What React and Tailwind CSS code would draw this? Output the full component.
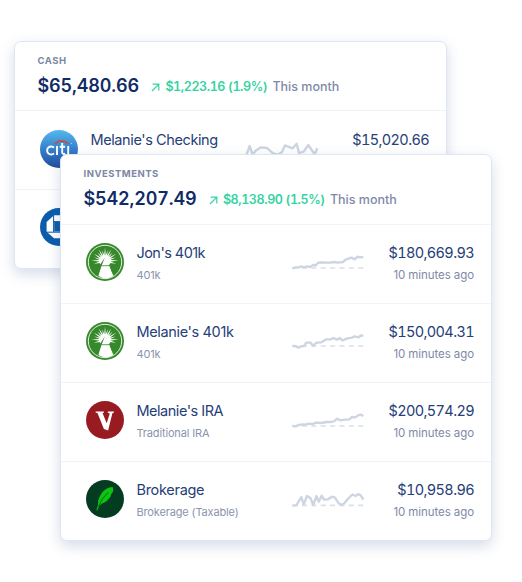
import React from 'react';

function Citi() {
  return (
    <svg viewBox="0 0 38 38" className="block size-[38px]">
      <defs>
        <linearGradient id="citi" x1="0" y1="0" x2="0" y2="1">
          <stop offset="0" stopColor="#56b8ec" />
          <stop offset="0.5" stopColor="#3580cc" />
          <stop offset="1" stopColor="#214c9c" />
        </linearGradient>
      </defs>
      <circle cx="19" cy="19" r="19" fill="url(#citi)" />
      <path d="M15 13.6Q21.5 8.2 28.2 13.6" fill="none" stroke="#d5463c" strokeWidth="1.7" />
      <g fill="none" stroke="#fff" strokeWidth="1.9">
        <path d="M14 17.7a4 4 0 1 0 0 5.6" />
        <path d="M17 16v9" />
        <path d="M22.2 13v9.2q0 2.3 3 1.6M19.7 16.8h5.4" />
        <path d="M28.2 16v9" />
      </g>
      <circle cx="31.5" cy="13.5" r="0.5" fill="#d7e9f8" />
    </svg>
  );
}

function Chase() {
  return (
    <svg viewBox="0 0 38 38" className="block size-[38px]">
      <circle cx="19" cy="19" r="19" fill="#0b5cab" />
      <path d="M14 7.2h11l6 6v11l-6 6H14l-7.4-6.4V14z" fill="#fff" />
      <path d="M14.2 14h10v9.6h-10z" fill="#0b5cab" />
      <path d="M13.6 7v17M6 24.2h19M31 13.6H14M24.4 31V14" stroke="#0b5cab" strokeWidth="1" fill="none" />
    </svg>
  );
}

const RAYS = [-104, -88, -72, -57, -42, -28, -14, 0, 14, 28, 42, 57, 72, 88, 104];

function Fidelity() {
  return (
    <svg viewBox="0 0 38 38" className="block size-[38px]">
      <circle cx="19" cy="19" r="19" fill="#36892a" />
      <circle cx="19" cy="19" r="16.7" fill="none" stroke="#f2f8ef" strokeWidth="0.9" />
      <g fill="#fff">
        {RAYS.map((a, i) => (
          <path key={a} d={i % 2 ? 'M17.8 17L19 4.6L20.2 17z' : 'M17.8 17L19 6.6L20.2 17z'} transform={`rotate(${a} 19 18)`} />
        ))}
        <circle cx="19" cy="18" r="5.8" />
        <path d="M15.4 22.5h7.8l4.2 10.6q-8 4.6-15 0z" />
      </g>
      <path d="M18.9 14.5L13 29l-3.4-1.6 4.6-6z" fill="#36892a" />
      <path d="M15.4 22.7h7.8" stroke="#36892a" strokeWidth="0.8" />
      <path d="M23.8 23.2l5.6 4.4-3.3 2z" fill="#36892a" />
    </svg>
  );
}

function Vanguard() {
  return (
    <svg viewBox="0 0 38 38" className="block size-[38px]">
      <circle cx="19" cy="19" r="19" fill="#981b22" />
      <path
        d="M9.6 10.4h8.3v1.2l-1.3.6 4.1 10 3.1-9.6-2-.9v-1.3h6.1v1l-1.5.9-4.3 17.2-4.2-1.6-6.3-15.6-2-.7z"
        fill="#fff"
      />
    </svg>
  );
}

function Robinhood() {
  return (
    <svg viewBox="0 0 38 38" className="block size-[38px]">
      <circle cx="19" cy="19" r="19" fill="#043c22" />
      <path
        d="M10.4 30L11.9 25.6L12.2 20.2Q12.8 17.6 15.8 13Q20 7.4 26.4 6.9Q27.6 8 27.1 11.4L25 14.6L24.4 17Q22 19.4 21 20.8Q18.4 23 15.6 23.8L13.6 25.4L11.3 30.4Z"
        fill="#0bc40f"
      />
      <path d="M12.4 26.6q3.4-8.8 9.8-14.2" fill="none" stroke="#043c22" strokeWidth="0.7" />
    </svg>
  );
}

function Spark({ points, base }) {
  return (
    <svg viewBox="0 0 222 120" className="block h-10 w-[74px] shrink-0" fill="none">
      <path d={`M5 ${base}H217`} stroke="#d9e0ea" strokeWidth="5" strokeDasharray="15 13.1" />
      <polyline points={points} stroke="#ccd5e1" strokeWidth="7" strokeLinejoin="round" />
    </svg>
  );
}

function Header({ label, total, change, heightClass }) {
  return (
    <div className={`pl-[22.5px] pt-3 ${heightClass}`}>
      <div className="text-[9.5px] leading-[14px] font-bold tracking-[0.5px] text-[#7d87a5]">{label}</div>
      <div className="mt-1.5 flex h-6 items-center whitespace-nowrap tabular-nums">
        <span className="text-[18px] leading-6 font-semibold tracking-[-0.15px] text-[#102c66]">{total}</span>
        <svg viewBox="0 0 9 9" className="ml-[12.5px] mt-0.5 size-[9px]" fill="none" stroke="#35d3a2" strokeWidth="1.2">
          <path d="M1 8L7.7 1.3M1.6 1.2h6.2v6.2" />
        </svg>
        <span className="ml-[5px] mt-px w-[101px] text-[12.5px] leading-4 font-semibold tracking-[-0.42px] text-[#35d3a2]">{change}</span>
        <span className="ml-1.5 mt-px text-[12.5px] leading-4 font-medium text-[#8089a8]">This month</span>
      </div>
    </div>
  );
}

function Row({ icon, name, nameClass, kind, amount, time, chart, topClass = 'pt-[17px]' }) {
  return (
    <div className={`flex h-[79px] items-start border-t border-[#f0f3f7] pr-[17px] pl-[25px] ${topClass}`}>
      <div className="mt-px shrink-0">{icon}</div>
      <div className="ml-[12.5px] w-[154.5px] whitespace-nowrap">
        <div className={`text-[14.5px] leading-[22px] text-[#264078] ${nameClass}`}>{name}</div>
        <div className="text-[11px] leading-[22px] tracking-[-0.15px] text-[#8b93ad]">{kind}</div>
      </div>
      <div className="mt-px">{chart}</div>
      <div className="flex-1 text-right whitespace-nowrap">
        <div className="text-[14.5px] leading-[22px] tracking-[-0.62px] text-[#264078] tabular-nums">{amount}</div>
        <div className="text-[11.5px] leading-[22px] tracking-[-0.08px] text-[#8089a8]">{time}</div>
      </div>
    </div>
  );
}

const CARD = 'rounded-[7px] border border-[#dfe6f3] bg-white shadow-[0_5px_14px_rgba(50,75,140,0.2)]';

export default function App() {
  return (
    <div className="relative h-[582px] w-[522px] overflow-hidden bg-white pt-[41px] pl-[14px] font-['Inter','Liberation_Sans',sans-serif]">
      <section className={`${CARD} h-[228px] w-[433px]`}>
        <Header label="CASH" total="$65,480.66" change="$1,223.16 (1.9%)" heightClass="h-[68px]" />
        <Row
          icon={<Citi />}
          name="Melanie's Checking"
          nameClass="tracking-[-0.4px]"
          amount="$15,020.66"
          topClass="pt-[18px]"
          chart={<Spark base={76} points="4,76 14,48 23,74 32,62 48,52 66,54 84,70 99,74 111,66 120,46 143,55 155,41 162,69 176,65 190,45 209,73 217,55" />}
        />
        <Row icon={<Chase />} />
      </section>
      <section className={`${CARD} absolute top-[154px] left-[60px] h-[387px] w-[432px]`}>
        <Header label="INVESTMENTS" total="$542,207.49" change="$8,138.90 (1.5%)" heightClass="h-[69px]" />
        <Row
          icon={<Fidelity />}
          name="Jon's 401k"
          nameClass="tracking-[-0.55px]"
          kind="401k"
          amount="$180,669.93"
          time="10 minutes ago"
          chart={<Spark base={75} points="4,76 14,73 25,73 30,70 39,73 49,70 57,72 68,65 73,68 82,59 94,58 104,59 116,59 130,57 142,59 156,57 164,50 181,44 192,49 199,41 206,43 217,42" />}
        />
        <Row
          icon={<Fidelity />}
          name="Melanie's 401k"
          nameClass="tracking-[-0.35px]"
          kind="401k"
          amount="$150,004.31"
          time="10 minutes ago"
          chart={<Spark base={72} points="4,72 12,72 22,77 30,73 39,72 46,62 59,62 66,71 77,62 91,61 106,52 120,52 127,48 138,53 146,48 154,55 169,49 183,47 190,43 203,46 209,40 217,42" />}
        />
        <Row
          icon={<Vanguard />}
          name="Melanie's IRA"
          nameClass="tracking-[-0.48px]"
          kind="Traditional IRA"
          amount="$200,574.29"
          time="10 minutes ago"
          chart={<Spark base={75} points="4,75 14,76 22,72 38,70 45,71 52,68 66,69 73,65 90,66 107,63 121,63 131,60 138,53 147,58 163,56 175,55 183,48 193,49 201,43 209,41 217,45" />}
        />
        <Row
          icon={<Robinhood />}
          name="Brokerage"
          nameClass="tracking-[-0.3px]"
          kind="Brokerage (Taxable)"
          amount="$10,958.96"
          time="10 minutes ago"
          chart={<Spark base={76} points="4,77 16,76 31,51 38,73 48,48 58,54 67,75 76,48 83,65 92,47 99,59 111,58 123,50 132,53 143,70 151,75 160,70 173,54 184,44 195,48 201,42 209,46 217,59" />}
        />
      </section>
    </div>
  );
}
